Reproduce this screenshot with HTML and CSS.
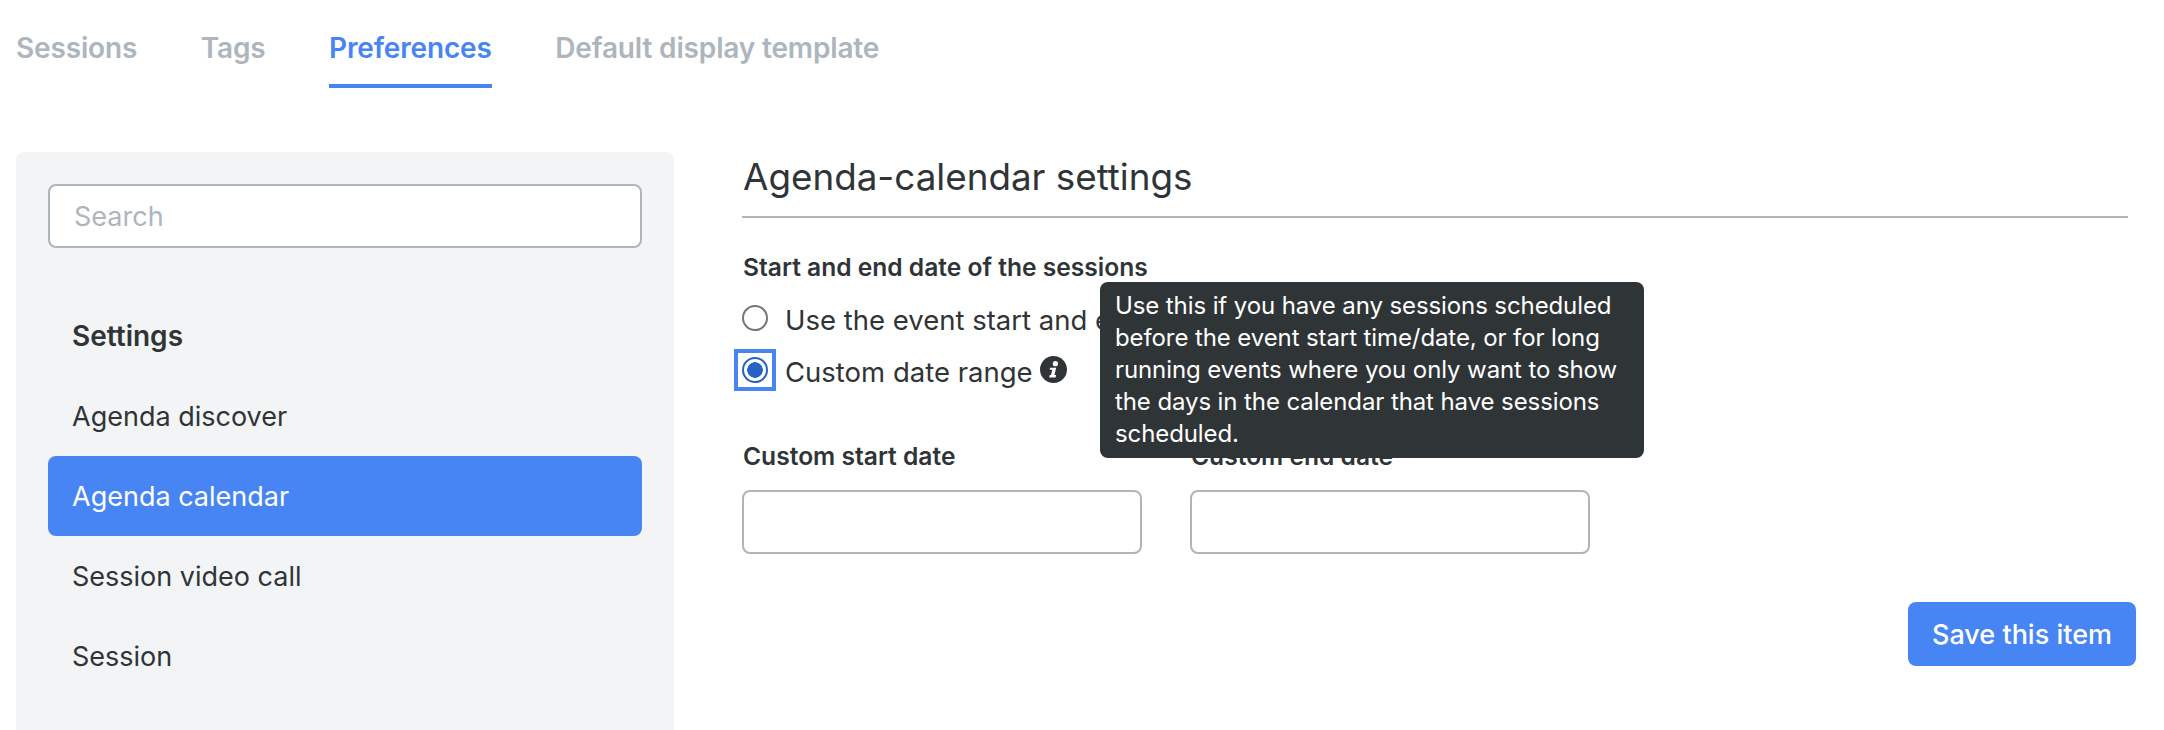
FILE: index.html
```html
<!DOCTYPE html>
<html lang="en">
<head>
  <meta charset="UTF-8">
  <title>Agenda-calendar settings</title>
  <link rel="stylesheet" href="styles.css">
</head>
<body>

<nav class="tabs">
  <a class="tab">Sessions</a>
  <a class="tab">Tags</a>
  <a class="tab active">Preferences</a>
  <a class="tab">Default display template</a>
</nav>

<div class="layout">
  <aside class="sidebar">
    <input class="field search" type="text" placeholder="Search">
    <div class="menu-title">Settings</div>
    <a class="menu-item">Agenda discover</a>
    <a class="menu-item selected">Agenda calendar</a>
    <a class="menu-item">Session video call</a>
    <a class="menu-item">Session</a>
  </aside>

  <main class="content">
    <h2 class="title">Agenda-calendar settings</h2>

    <div class="group-label">Start and end date of the sessions</div>
    <label class="radio-row">
      <span class="radio-wrap"><input class="radio" type="radio" name="range"></span>
      <span class="radio-text">Use the event start and end date</span>
    </label>
    <label class="radio-row">
      <span class="radio-wrap focused"><input class="radio" type="radio" name="range" checked></span>
      <span class="radio-text">Custom date range</span>
      <svg class="info" viewBox="0 0 26 26" aria-hidden="true">
        <circle cx="13" cy="13" r="13" fill="#2f3437"/>
        <circle cx="14.8" cy="7.4" r="2.5" fill="#fff"/>
        <path d="M9.8 11.2h5.8l-1.7 7.2h1.6l-.5 2.2H8.900l.5-2.200h1.200l1.200-5.200H9.300z" fill="#fff"/>
      </svg>
    </label>

    <div class="tooltip">Use this if you have any sessions scheduled before the event start time/date, or for long running events where you only want to show the days in the calendar that have sessions scheduled.</div>

    <div class="dates">
      <div>
        <div class="group-label">Custom start date</div>
        <input class="field date" type="text">
      </div>
      <div>
        <div class="group-label">Custom end date</div>
        <input class="field date" type="text">
      </div>
    </div>

    <div class="actions">
      <button class="save">Save this item</button>
    </div>
  </main>
</div>

</body>
</html>
```

FILE: styles.css
```css
body {
  font-family: Inter, 'Liberation Sans', sans-serif;
  font-size: 27px;
  color: #2f3437;
  background: #fff;
  margin: 0;
  height: 730px;
  overflow: hidden;
}

.tabs {
  display: flex;
  gap: 63.5px;
  padding: 0 16px;
  height: 88px;
}

.tab {
  box-sizing: border-box;
  height: 88px;
  line-height: 96px;
  font-size: 28px;
  font-weight: 600;
  letter-spacing: -0.15px;
  color: #adb5bd;
}

.tab.active {
  color: #4785f4;
  border-bottom: 4px solid #4785f4;
}

.layout {
  display: flex;
  gap: 68px;
  padding: 64px 36px 0 16px;
}

.sidebar {
  box-sizing: border-box;
  flex: 0 0 658px;
  height: 600px;
  padding: 32px;
  background: #f3f4f6;
  border-radius: 8px;
}

.field {
  box-sizing: border-box;
  display: block;
  height: 64px;
  padding: 0 24px;
  font: inherit;
  background: #fff;
  border: 2px solid #adb5bd;
  border-radius: 8px;
}

.field::placeholder {
  color: #adb5bd;
}

.search {
  width: 100%;
}

.menu-title {
  height: 80px;
  line-height: 80px;
  margin-top: 48px;
  padding: 0 24px;
  font-size: 28px;
  font-weight: 600;
}

.menu-item {
  display: block;
  height: 80px;
  line-height: 82px;
  padding: 0 24px;
  border-radius: 8px;
}

.menu-item.selected {
  background: #4785f4;
  color: #fff;
}

.content {
  position: relative;
  flex: 1;
}

.title {
  margin: 0;
  height: 64px;
  padding-left: 1px;
  line-height: 50px;
  font-size: 36.8px;
  font-weight: 400;
  border-bottom: 2px solid #adb5bd;
}

.group-label {
  padding-left: 1px;
  font-size: 24.6px;
  font-weight: 600;
  line-height: 32px;
}

.content > .group-label {
  margin-top: 33px;
}

.radio-row {
  display: flex;
  align-items: center;
  height: 52px;
  line-height: 52px;
  font-size: 27.5px;
}

.radio-row:first-of-type {
  margin-top: 9px;
}

.radio-text {
  margin-top: 3px;
}

.radio-wrap {
  box-sizing: border-box;
  display: flex;
  width: 42px;
  height: 42px;
  margin: 0 9px 0 -8px;
  padding: 4px;
  border: 4px solid transparent;
}

.radio-wrap.focused {
  border-color: #4785f4;
}

.radio {
  appearance: none;
  box-sizing: border-box;
  flex: none;
  width: 26px;
  height: 26px;
  margin: 0;
  background: #fff;
  border: 2px solid #767676;
  border-radius: 50%;
}

.radio:checked {
  border-color: #2563c9;
  background: radial-gradient(circle, #2563c9 0 7.5px, #fff 8px);
}

.info {
  width: 27px;
  height: 27px;
  margin: -2px 0 0 7px;
}

.tooltip {
  box-sizing: border-box;
  position: absolute;
  top: 130px;
  left: 358px;
  width: 544px;
  padding: 8px 15px;
  font-size: 24px;
  line-height: 32px;
  letter-spacing: -0.1px;
  color: #fff;
  background: #2f3437;
  border-radius: 8px;
}

.dates {
  display: flex;
  gap: 48px;
  margin-top: 44px;
}

.date {
  width: 400px;
  margin-top: 18px;
}

.actions {
  display: flex;
  justify-content: flex-end;
  margin: 48px -8px 0 0;
}

.save {
  width: 228px;
  height: 64px;
  padding: 0;
  font: inherit;
  font-weight: 500;
  color: #fff;
  background: #4785f4;
  border: none;
  border-radius: 8px;
}
```
